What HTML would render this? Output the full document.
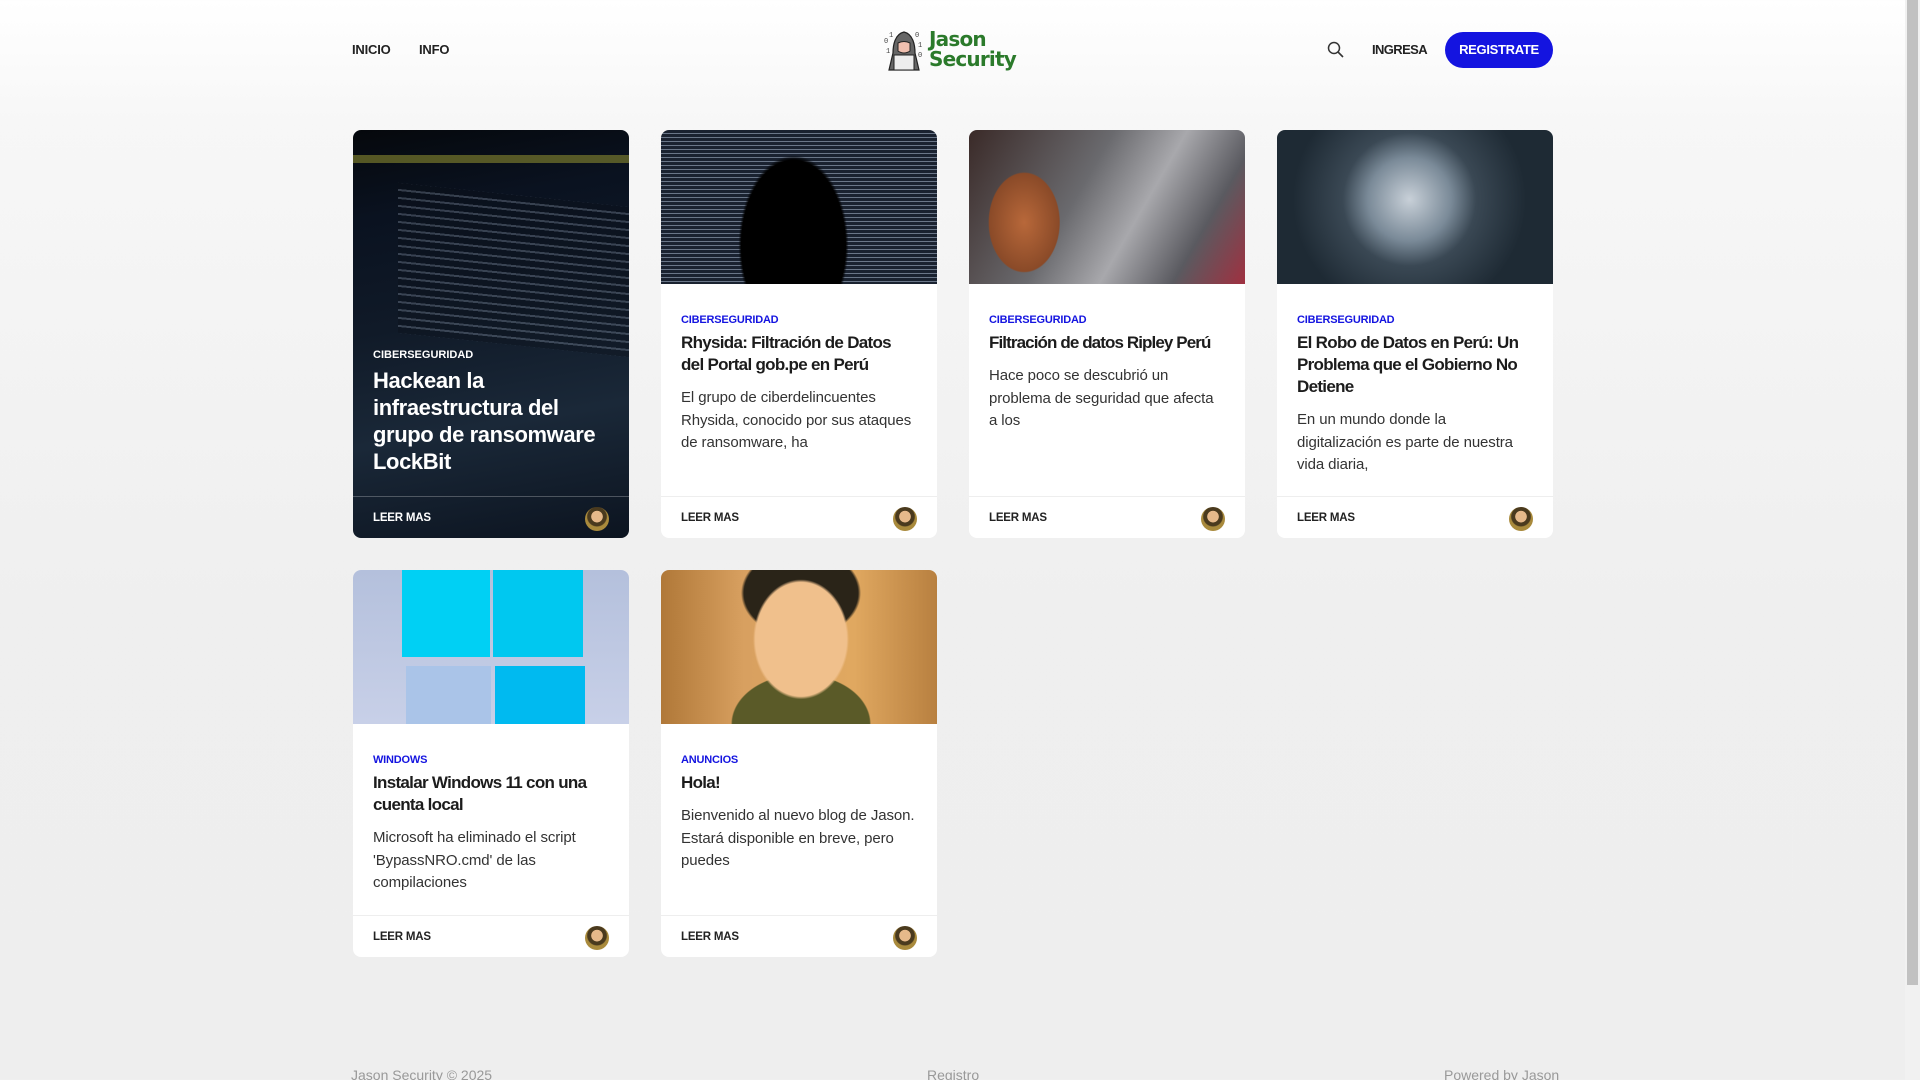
<!DOCTYPE html>
<html><head><meta charset="utf-8"><style>
*{box-sizing:border-box;margin:0;padding:0}
html,body{width:1920px;height:1080px;overflow:hidden}
body{font-family:"Liberation Sans",sans-serif;background:linear-gradient(#fff 0,#f7f7f7 120px,#efefef 600px,#eeeeee 1080px);position:relative;color:#222}
.nav{position:absolute;top:42px;font-size:13px;font-weight:bold;color:#222;letter-spacing:-.2px}
.btn{position:absolute;left:1445px;top:32px;width:108px;height:36px;border-radius:18px;background:#1414e0;color:#fff;font-size:13px;font-weight:bold;text-align:center;line-height:36px;letter-spacing:-.3px}
.card{position:absolute;width:276px;background:#fff;border-radius:8px;overflow:hidden}
.img{height:154px;width:100%}
.body{padding:0 20px}
.cat{font-size:11px;font-weight:bold;color:#1414e0;margin-top:30px;letter-spacing:-.2px}
.title{font-size:17px;font-weight:bold;line-height:22px;margin-top:6px;letter-spacing:-.7px;color:#1c1c1c}
.ex{font-size:15px;line-height:22.5px;margin-top:11px;color:#333;letter-spacing:-.1px}
.foot{position:absolute;left:0;right:0;bottom:0;height:42px;border-top:1px solid #eee}
.lm{position:absolute;left:20px;top:15px;font-size:11.5px;font-weight:bold;color:#222;letter-spacing:-.2px}
.av{position:absolute;right:20px;top:10px;width:24px;height:24px;border-radius:50%;background:radial-gradient(circle at 50% 40%,#e6b98a 0 30%,#4a3a1e 32% 50%,#a98a3c 55%)}
.ft{position:absolute;top:1067px;font-size:14px;color:#999}
</style></head><body>
<div class="nav" style="left:352px">INICIO</div>
<div class="nav" style="left:419px">INFO</div>
<svg style="position:absolute;left:882px;top:29px" width="44" height="42" viewBox="0 0 44 42">
<text x="2" y="14" font-size="7" font-family="Liberation Mono" fill="#444">0</text><text x="7" y="8" font-size="7" font-family="Liberation Mono" fill="#444">1</text><text x="4" y="24" font-size="7" font-family="Liberation Mono" fill="#444">1</text>
<text x="33" y="8" font-size="7" font-family="Liberation Mono" fill="#444">0</text><text x="36" y="18" font-size="7" font-family="Liberation Mono" fill="#444">1</text><text x="36" y="28" font-size="7" font-family="Liberation Mono" fill="#444">0</text>
<path d="M22 3 C13 5 11 16 11 24 L7 41 L37 41 L33 24 C33 16 31 5 22 3Z" fill="#666" stroke="#222" stroke-width="1.2"/>
<path d="M16 14 Q22 11 28 14 L28 22 Q22 26 16 22Z" fill="#f0c0b0" stroke="#222"/>
<rect x="12" y="26" width="20" height="15" fill="#eee" stroke="#222"/>
</svg>
<div style="position:absolute;left:929px;top:29px;font-family:'DejaVu Sans',sans-serif;font-size:20px;font-weight:bold;line-height:20px;color:#2b7a2b;letter-spacing:-.8px">Jason<br>Security</div>
<svg style="position:absolute;left:1327px;top:41px" width="17" height="17" viewBox="0 0 17 17"><circle cx="7" cy="7" r="5.5" fill="none" stroke="#333" stroke-width="1.5"/><path d="M11 11 L16 16" stroke="#333" stroke-width="1.6"/></svg>
<div class="nav" style="left:1372px;letter-spacing:-.6px">INGRESA</div>
<div class="btn">REGISTRATE</div>

<div class="card" style="left:353px;top:130px;height:408px;background:linear-gradient(170deg,#05080c 0,#0a1220 20%,#101a28 45%,#1a2838 70%,#0c1420 100%)">
<div style="position:absolute;left:0;right:0;top:25px;height:8px;background:#8a8a30;opacity:.6"></div>
<div style="position:absolute;left:45px;top:65px;right:0;height:150px;background:repeating-linear-gradient(#0a0f18 0 6px,#8a96a8 6px 8px);opacity:.35;transform:skewY(6deg)"></div>
<div style="position:absolute;left:20px;top:219px;color:#fff;font-size:11px;font-weight:bold">CIBERSEGURIDAD</div>
<div style="position:absolute;left:20px;top:237px;width:225px;color:#fff;font-size:22px;font-weight:bold;line-height:27px;letter-spacing:-.4px">Hackean la infraestructura del grupo de ransomware LockBit</div>
<div class="foot" style="border-top:1px solid rgba(255,255,255,.25)"><div class="lm" style="color:#fff">LEER MAS</div><div class="av"></div></div>
</div>

<div class="card" style="left:661px;top:130px;height:408px">
<div class="img" style="background:radial-gradient(ellipse 55px 90px at 48% 75%,#000 0 95%,transparent 100%),repeating-linear-gradient(#1a2230 0 3px,#6a7688 3px 4px);"></div>
<div class="body"><div class="cat">CIBERSEGURIDAD</div><div class="title">Rhysida: Filtración de Datos del Portal gob.pe en Perú</div><div class="ex">El grupo de ciberdelincuentes Rhysida, conocido por sus ataques de ransomware, ha</div></div>
<div class="foot"><div class="lm">LEER MAS</div><div class="av"></div></div></div>

<div class="card" style="left:969px;top:130px;height:408px">
<div class="img" style="background:radial-gradient(ellipse 50px 70px at 20% 60%,#b8683a,#8a4a28 70%,transparent 72%),linear-gradient(120deg,#3a2a28 0,#6a6a6e 40%,#a8a8ac 60%,#5a5a60 80%,#a03040 100%)"></div>
<div class="body"><div class="cat">CIBERSEGURIDAD</div><div class="title" style="letter-spacing:-.9px">Filtración de datos Ripley Perú</div><div class="ex">Hace poco se descubrió un problema de seguridad que afecta a los</div></div>
<div class="foot"><div class="lm">LEER MAS</div><div class="av"></div></div></div>

<div class="card" style="left:1277px;top:130px;height:408px">
<div class="img" style="background:radial-gradient(circle at 48% 45%,#c8d0d8 0,#7a8a98 25%,#3a4854 40%,#1e2a34 70%)"></div>
<div class="body"><div class="cat">CIBERSEGURIDAD</div><div class="title">El Robo de Datos en Perú: Un Problema que el Gobierno No Detiene</div><div class="ex">En un mundo donde la digitalización es parte de nuestra vida diaria,</div></div>
<div class="foot"><div class="lm">LEER MAS</div><div class="av"></div></div></div>

<div class="card" style="left:353px;top:570px;height:387px">
<div class="img" style="position:relative;background:linear-gradient(#b4c0dc,#c8d0e8)">
<div style="position:absolute;left:49px;top:0;width:88px;height:87px;background:#00d0f4"></div>
<div style="position:absolute;left:140px;top:0;width:90px;height:87px;background:#00c8f0"></div>
<div style="position:absolute;left:53px;top:96px;width:85px;height:58px;background:#aac4e8"></div>
<div style="position:absolute;left:142px;top:96px;width:90px;height:58px;background:#00baf0"></div>
</div>
<div class="body"><div class="cat">WINDOWS</div><div class="title">Instalar Windows 11 con una cuenta local</div><div class="ex">Microsoft ha eliminado el script 'BypassNRO.cmd' de las compilaciones</div></div>
<div class="foot"><div class="lm">LEER MAS</div><div class="av"></div></div></div>

<div class="card" style="left:661px;top:570px;height:387px">
<div class="img" style="position:relative;background:linear-gradient(90deg,#b07838,#d8a060 30%,#e0a860 70%,#b88040)">
<div style="position:absolute;left:70px;top:0;width:140px;height:154px;background:radial-gradient(ellipse 48px 60px at 50% 45%,#f0c08c 0 95%,transparent 100%),radial-gradient(ellipse 70px 50px at 50% 100%,#5a5a28 0 98%,transparent 100%),radial-gradient(ellipse 60px 45px at 50% 15%,#2a2418 0 95%,transparent 100%)"></div>
</div>
<div class="body"><div class="cat">ANUNCIOS</div><div class="title">Hola!</div><div class="ex">Bienvenido al nuevo blog de Jason. Estará disponible en breve, pero puedes</div></div>
<div class="foot"><div class="lm">LEER MAS</div><div class="av"></div></div></div>

<div class="ft" style="left:351px">Jason Security © 2025</div>
<div class="ft" style="left:927px">Registro</div>
<div class="ft" style="left:1444px">Powered by Jason</div>
<div style="position:absolute;left:1905px;top:0;width:15px;height:1080px;background:#f1f1f1"></div>
<div style="position:absolute;left:1907px;top:0;width:11px;height:985px;background:#c1c1c1"></div>
</body></html>
